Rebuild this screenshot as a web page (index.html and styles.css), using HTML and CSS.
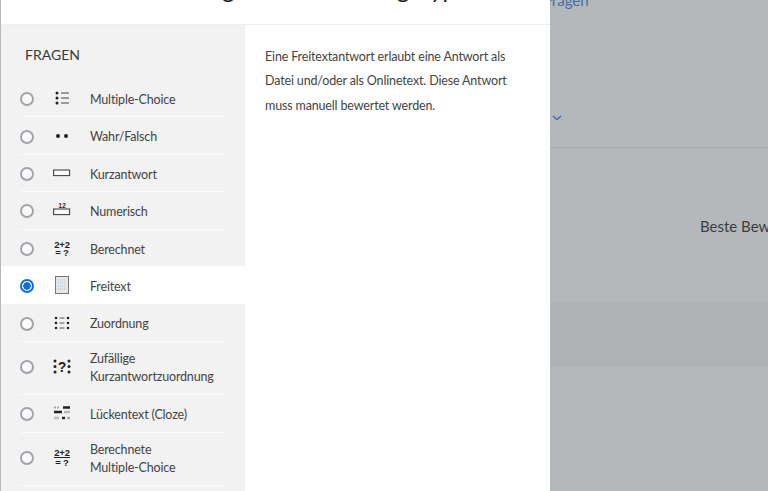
FILE: index.html
```html
<!DOCTYPE html>
<html lang="de">
<head>
<meta charset="utf-8">
<title>Fragetyp</title>
<link rel="stylesheet" href="styles.css">
</head>
<body>
<main class="page">
  <a class="crumb" href="#">Fragen</a>
  <div class="tabs"><svg class="chev" width="10" height="6" viewBox="0 0 10 6"><path d="M1 1l4 3.6L9 1" fill="none" stroke="#3f6fa8" stroke-width="1.5"/></svg></div>
  <p class="grade">Beste Bewertung</p>
  <div class="band"></div>
</main>
<section class="modal">
  <header class="modal-head"><h2 class="modal-title">Neue Frage mit einem Fragetyp</h2></header>
  <div class="modal-body">
    <div class="options">
      <div class="group-label">FRAGEN</div>
      <label class="row"><input class="radio" type="radio" name="q"><span class="ico"><svg width="14" height="14" viewBox="0 0 14 14"><g fill="#222"><circle cx="2" cy="2" r="1.5"/><circle cx="2" cy="7" r="1.5"/><circle cx="2" cy="12" r="1.5"/></g><path d="M6 2h8M6 7h8M6 12h8" stroke="#444" stroke-width="1.2"/></svg></span><span class="name">Multiple-Choice</span></label>
      <label class="row"><input class="radio" type="radio" name="q"><span class="ico"><svg width="14" height="6" viewBox="0 0 14 6"><circle cx="3" cy="3" r="2" fill="#222"/><circle cx="11" cy="3" r="2" fill="#222"/></svg></span><span class="name">Wahr/Falsch</span></label>
      <label class="row"><input class="radio" type="radio" name="q"><span class="ico"><svg width="18" height="8" viewBox="0 0 18 8"><rect x=".6" y="1" width="16" height="5.6" fill="#f8f8f8" stroke="#444" stroke-width="1.1"/></svg></span><span class="name">Kurzantwort</span></label>
      <label class="row"><input class="radio" type="radio" name="q"><span class="ico ico-up"><svg width="18" height="14" viewBox="0 0 18 14"><text x="9" y="6" text-anchor="middle" class="svg-small">12</text><rect x=".6" y="7" width="16" height="5.6" fill="#f8f8f8" stroke="#444" stroke-width="1.1"/></svg></span><span class="name">Numerisch</span></label>
      <label class="row"><input class="radio" type="radio" name="q"><span class="ico"><svg width="18" height="18" viewBox="0 0 18 18"><text x="9" y="8.5" text-anchor="middle" class="svg-math">2+2</text><text x="9" y="17" text-anchor="middle" class="svg-math">= ?</text></svg></span><span class="name">Berechnet</span></label>
      <label class="row row-active"><input class="radio" type="radio" name="q" checked><span class="ico"><svg width="14" height="18" viewBox="0 0 14 18"><rect x=".5" y=".5" width="13" height="17" fill="#e4e7e8" stroke="#777"/><path d="M3 4h8M3 7h8M3 10h8M3 13h8" stroke="#c4cbcf" stroke-width="1.6" stroke-dasharray="1 1"/></svg></span><span class="name">Freitext</span></label>
      <label class="row"><input class="radio" type="radio" name="q"><span class="ico"><svg width="16" height="14" viewBox="0 0 16 14"><g fill="#222"><circle cx="2" cy="2" r="1.3"/><circle cx="14" cy="2" r="1.3"/><circle cx="2" cy="7" r="1.3"/><circle cx="14" cy="7" r="1.3"/><circle cx="2" cy="12" r="1.3"/><circle cx="14" cy="12" r="1.3"/></g><path d="M5.5 2h5M5.5 7h5M5.5 12h5" stroke="#555" stroke-width="1.1"/></svg></span><span class="name">Zuordnung</span></label>
      <label class="row row-tall"><input class="radio" type="radio" name="q"><span class="ico"><svg width="18" height="15" viewBox="0 0 18 15"><g fill="#222"><circle cx="2" cy="2" r="1.5"/><circle cx="2" cy="7.5" r="1.5"/><circle cx="2" cy="13" r="1.5"/><circle cx="16" cy="2" r="1.5"/><circle cx="16" cy="7.5" r="1.5"/><circle cx="16" cy="13" r="1.5"/></g><text x="9" y="12.5" text-anchor="middle" class="svg-q">?</text></svg></span><span class="name">Zufällige<br>Kurzantwortzuordnung</span></label>
      <label class="row row-mid"><input class="radio" type="radio" name="q"><span class="ico"><svg width="16" height="14" viewBox="0 0 16 14"><path d="M0 1.5h2M3 1.5h2" stroke="#aaa" stroke-width="2"/><path d="M9 1.5h7M0 6h8" stroke="#222" stroke-width="2.4"/><path d="M10 6h6M0 12h5" stroke="#bbb" stroke-width="2.4"/><path d="M8 12h3" stroke="#222" stroke-width="2.4"/><path d="M13 12h3" stroke="#aaa" stroke-width="2.4"/></svg></span><span class="name">Lückentext (Cloze)</span></label>
      <label class="row row-tall"><input class="radio" type="radio" name="q"><span class="ico"><svg width="16" height="19" viewBox="0 0 16 19"><text x="8" y="8" text-anchor="middle" class="svg-math">2+2</text><path d="M0 9.5h16" stroke="#222"/><text x="8" y="18" text-anchor="middle" class="svg-math">= ?</text></svg></span><span class="name">Berechnete<br>Multiple-Choice</span></label>
    </div>
    <div class="summary">
      <p>Eine Freitextantwort erlaubt eine Antwort als Datei und/oder als Onlinetext. Diese Antwort muss manuell bewertet werden.</p>
    </div>
  </div>
</section>
</body>
</html>
```
FILE: styles.css
```css
* { box-sizing: border-box; }
html, body { margin: 0; height: 100%; overflow: hidden; }
body {
  position: relative;
  background: #b5b8bb;
  font-family: Lato, "Noto Sans", sans-serif;
  color: #373a3c;
}
.page { height: 491px; padding-left: 550px; overflow: hidden; }
.crumb { display: block; margin-left: -6px; margin-top: -12px; height: 24px; line-height: 24px; font-size: 15px; color: #3f6fa8; text-decoration: none; }
.tabs { height: 136px; border-bottom: 1px solid #a6a9ac; padding: 103px 0 0 2px; }
.chev { display: block; }
.grade { margin: 68px 0 0 150px; font-size: 15px; line-height: 20px; white-space: nowrap; color: #3b3e41; }
.band { height: 65px; margin-top: 66px; background: #b0b3b5; }

.modal { position: absolute; left: 1px; top: -36px; width: 549px; height: 527px; background: #fff; overflow: hidden; }
.modal-head { height: 61px; border-bottom: 1px solid #eee; padding: 7px 0 0 0; }
.modal-title { margin: 0; font-size: 24px; line-height: 36px; font-weight: 400; color: #222; text-align: right; padding-right: 94px; white-space: nowrap; }
.modal-body { display: flex; height: 466px; }
.options { width: 244px; background: #f2f2f2; flex: none; }
.group-label { height: 55px; padding: 20px 0 0 24px; font-size: 14px; line-height: 20px; color: #373a3c; }
.row { display: flex; align-items: center; min-height: 37.4px; margin: 0 20px 0 19px; border-bottom: 1px solid #fafafa; font-size: 12.5px; letter-spacing: -.17px; line-height: 18.4px; color: #444; }
.row-tall { padding: 4px 0 7px; }
.row-mid { min-height: 38.4px; }
.row-active { margin: -1px 0 0; min-height: 38.4px; padding: 0 20px 0 19px; background: #fff; border-bottom: 0; }
.radio { appearance: none; position: relative; top: 1px; width: 14px; height: 14px; margin: 0; flex: none; border: 2px solid #a3a3ad; border-radius: 50%; background: #fafafa; }
.radio:checked { border-color: #0f6fe0; background: radial-gradient(circle, #0f6fe0 0 3.5px, #fff 4px); }
.ico { width: 56px; display: flex; justify-content: center; flex: none; }
.ico-up { margin-top: -3px; }
.name { flex: 1; padding-top: 4px; }
.svg-small { font: 700 7px "Liberation Sans", sans-serif; fill: #333; }
.svg-math { font: 700 9.5px "Liberation Sans", sans-serif; fill: #222; }
.svg-q { font: 700 14px "Liberation Sans", sans-serif; fill: #222; }
.summary { flex: 1; padding: 20px 20px 0 20px; font-size: 12.5px; letter-spacing: -.15px; line-height: 24.4px; color: #444; }
.summary p { margin: 0; }
```
